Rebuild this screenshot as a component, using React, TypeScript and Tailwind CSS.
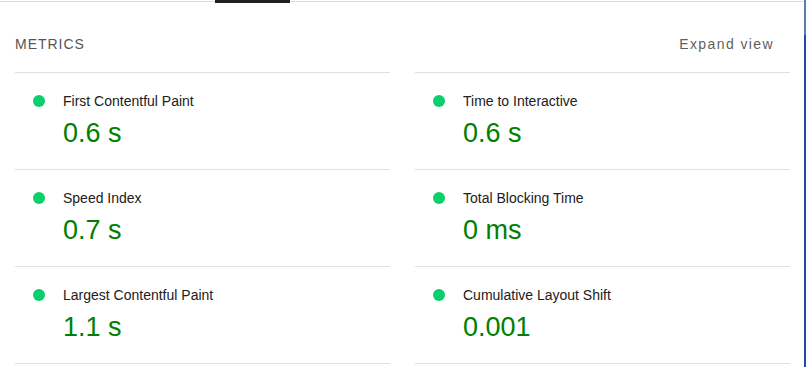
import React from "react";

const metrics = [
  { label: "First Contentful Paint", value: "0.6 s" },
  { label: "Time to Interactive", value: "0.6 s" },
  { label: "Speed Index", value: "0.7 s" },
  { label: "Total Blocking Time", value: "0 ms" },
  { label: "Largest Contentful Paint", value: "1.1 s" },
  { label: "Cumulative Layout Shift", value: "0.001" },
];

const Metric = ({ label, value, last }: { label: string; value: string; last: boolean }) => (
  <div
    className={`h-[97px] border-t border-[#e0e0e0] pl-[18px] pt-[18px] ${
      last ? "border-b h-[98px]" : ""
    }`}
  >
    <div className="flex h-[20px] items-center">
      <span className="h-[12px] w-[12px] rounded-full bg-[#0cce6b]" />
      <span className="ml-[18px] text-[14px] leading-[20px] text-[#212121]">{label}</span>
    </div>
    <div className="ml-[30px] mt-[6px] text-[27px] leading-[32px] text-[#008000]">{value}</div>
  </div>
);

export default function App() {
  return (
    <div
      className="flex h-[367px] w-[806px] overflow-hidden bg-white"
      style={{ fontFamily: '"Liberation Sans", Arial, sans-serif' }}
    >
      <div className="flex flex-1 flex-col">
        {/* tab strip */}
        <div className="relative h-[3px]">
          <div className="mt-[1px] h-[1px] bg-[#dadce0]" />
          <div className="absolute left-[215px] top-0 h-[3px] w-[75px] bg-[#202124]" />
        </div>

        <div className="pl-[15px] pr-[14px]">
          <div className="flex items-center justify-between pt-[31px] pb-[18px] leading-[20px]">
            <span className="text-[14px] font-medium tracking-[0.07em] text-[#555555]">METRICS</span>
            <span className="mr-[16px] text-[14px] tracking-[0.1em] text-[#5f5f5f]">Expand view</span>
          </div>

          <div className="grid grid-cols-2 gap-x-[25px]">
            {metrics.map((m, i) => (
              <Metric key={m.label} label={m.label} value={m.value} last={i >= 4} />
            ))}
          </div>
        </div>
      </div>

      {/* window edge */}
      <div className="flex w-[2px] flex-col">
        <div className="h-[35px] bg-[#5a7fae]" />
        <div className="flex-1 bg-[#2347ad]" />
      </div>
    </div>
  );
}
